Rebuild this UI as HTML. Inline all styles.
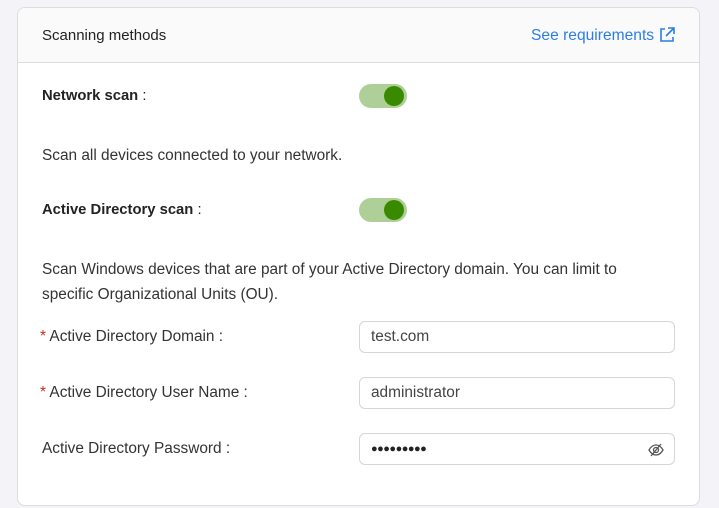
<!DOCTYPE html>
<html><head><style>
body{margin:0;width:719px;height:508px;background:#f3f3f8;font-family:"Liberation Sans",sans-serif;overflow:hidden;position:relative;color:#333}
.card{position:absolute;left:17px;top:7px;width:681px;height:497px;background:#fff;border:1px solid #dcdce0;border-radius:8px;overflow:hidden}
.hdr{height:54px;background:#fafafa;border-bottom:1px solid #dcdce0;position:relative}
.t{position:absolute;font-size:15.4px;white-space:nowrap}
.b{font-weight:bold;color:#222;font-size:14.8px}
.tog{position:absolute;left:341px;width:48px;height:24px;border-radius:12px;background:#aecf97}
.tog::after{content:"";position:absolute;right:3px;top:2px;width:20px;height:20px;border-radius:50%;background:#3a8a00}
.in{position:absolute;left:341px;width:316px;border:1px solid #d6d6da;border-radius:6px;font-size:15.4px;line-height:30px;padding-left:11px;box-sizing:border-box;height:32px;color:#444}
.r{color:#d0281c}
</style></head><body>
<div class="card">
<div class="hdr">
<div class="t" style="left:24px;top:19px;color:#222;font-size:15px">Scanning methods</div>
<div class="t" style="left:513px;top:19px;color:#2b7de9;font-size:15.6px">See requirements</div>
<svg style="position:absolute;left:640px;top:18px" width="18" height="18" viewBox="0 0 18 18" fill="none" stroke="#2b7de9" stroke-width="1.6"><path d="M7 3H3v12h12v-4M10 2h6v6M16 2l-8 8"/></svg>
</div>
<div class="t b" style="left:24px;top:80px">Network scan<span style="font-weight:normal"> :</span></div>
<div class="tog" style="top:76px"></div>
<div class="t" style="left:24px;top:139px">Scan all devices connected to your network.</div>
<div class="t b" style="left:24px;top:194px">Active Directory scan<span style="font-weight:normal"> :</span></div>
<div class="tog" style="top:190px"></div>
<div class="t" style="left:24px;top:253px">Scan Windows devices that are part of your Active Directory domain. You can limit to</div>
<div class="t" style="left:24px;top:278px">specific Organizational Units (OU).</div>
<div class="t" style="left:22px;top:320px"><span class="r">*</span> Active Directory Domain :</div>
<div class="in" style="top:313px">test.com</div>
<div class="t" style="left:22px;top:376px"><span class="r">*</span> Active Directory User Name :</div>
<div class="in" style="top:369px">administrator</div>
<div class="t" style="left:24px;top:432px">Active Directory Password :</div>
<div class="in" style="top:425px;font-size:11px;letter-spacing:-0.5px;color:#222">●●●●●●●●●
<svg style="position:absolute;right:10px;top:8px" width="16" height="16" viewBox="0 0 16 16" fill="none" stroke="#555" stroke-width="1.3"><path d="M1 8c2-3.5 4.5-5 7-5s5 1.5 7 5c-2 3.5-4.5 5-7 5S3 11.5 1 8z"/><circle cx="8" cy="8" r="2.5"/><path d="M13 2L3 14"/></svg></div>
</div>
</body></html>
